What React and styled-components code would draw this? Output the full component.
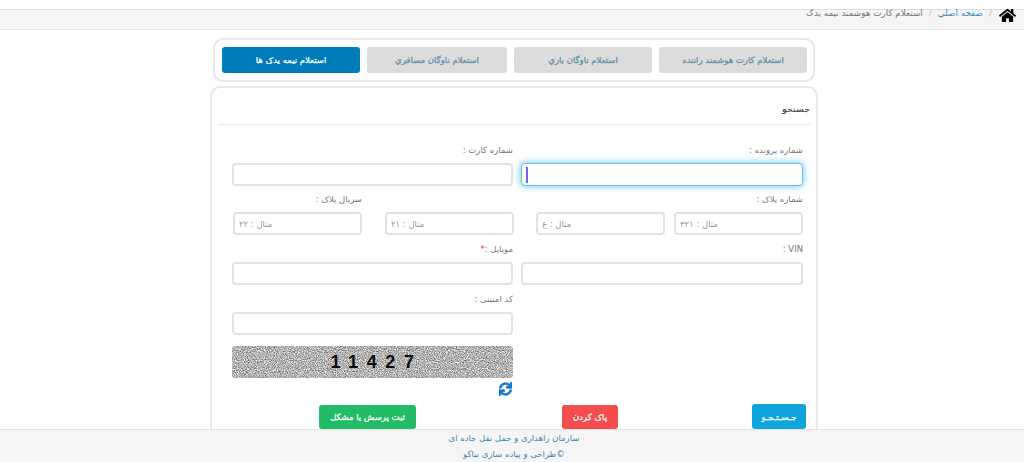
import React from 'react';
import styled, { createGlobalStyle } from 'styled-components';
import { FaHome, FaSync } from 'react-icons/fa';

const GlobalStyle = createGlobalStyle`
  html, body {
    margin: 0;
    height: 100%;
    overflow: hidden;
    background: #fff;
  }
  body {
    font-family: "DejaVu Sans", "Noto Sans", sans-serif;
    font-size: 8.5px;
    color: #777;
  }
  * {
    box-sizing: border-box;
  }
`;

const Page = styled.div`
  direction: rtl;
  padding-top: 9px;
  height: 462px;
  overflow: hidden;
`;

const Breadcrumb = styled.div`
  display: flex;
  align-items: flex-start;
  height: 21px;
  padding-right: 8px;
  background: #f5f5f5;
  border-top: 1px solid #ddd;
  border-bottom: 1px solid #e6e6e6;
  font-size: 8.8px;
  line-height: 7px;
`;

const HomeIcon = styled(FaHome)`
  width: 17px;
  height: 17px;
  margin: -3px 0 0 1px;
  color: #000;
  flex: none;
`;

const Crumb = styled.a`
  color: ${(p) => (p.$current ? '#777' : '#3a8fc0')};
  white-space: nowrap;
`;

const Slash = styled.span`
  color: #bbb;
  margin: 0 6px;
`;

const Column = styled.div`
  width: 608px;
  margin: 8px 206px 0 0;
`;

const TabBar = styled.div`
  display: flex;
  gap: 7px;
  width: 602px;
  height: 44px;
  margin: 0 3px;
  padding: 7px 6px 7px 7px;
  border: 2px solid #e8e8e8;
  border-radius: 10px;
`;

const Tab = styled.div`
  display: flex;
  align-items: center;
  justify-content: center;
  width: ${(p) => p.$width}px;
  height: 26px;
  border-radius: 3px;
  font-size: 8.5px;
  -webkit-text-stroke: 0.25px currentColor;
  background: ${(p) => (p.$active ? '#007cba' : '#dcdcdc')};
  color: ${(p) => (p.$active ? '#fff' : '#5f8fab')};
`;

const Panel = styled.div`
  height: 400px;
  margin-top: 4px;
  padding: 0 6px;
  border: 2px solid #e8e8e8;
  border-radius: 10px;
`;

const PanelHeader = styled.div`
  display: flex;
  align-items: center;
  height: 37px;
  padding-top: 7px;
  border-bottom: 1px solid #e6e6e6;
  color: #555;
  font-size: 8px;
  font-weight: bold;
`;

const FormBody = styled.div`
  padding: 19px 7px 0 15px;
`;

const TwoCols = styled.div`
  display: grid;
  grid-template-columns: 282px 281px;
  column-gap: 8px;
  margin-bottom: ${(p) => p.$after ?? 7}px;
`;

const Field = styled.div`
  position: relative;
  width: ${(p) => (p.$width ? `${p.$width}px` : 'auto')};
  margin-left: ${(p) => p.$gap ?? 0}px;
`;

const Label = styled.div`
  height: 13px;
  line-height: 13px;
  margin-bottom: 6px;
  color: #777;
`;

const Star = styled.span`
  color: #e33;
`;

const Input = styled.input`
  display: block;
  width: 100%;
  height: 23px;
  direction: ltr;
  padding: 0 4px;
  font: inherit;
  font-size: 8.5px;
  background: #fff;
  border: ${(p) => (p.$focused ? '1px solid #66c4ea' : '2px solid #e2e2e2')};
  border-radius: 4px;
  box-shadow: ${(p) => (p.$focused ? '0 0 6px 1px rgba(82, 190, 240, 0.75)' : 'none')};
  outline: none;
  &::placeholder {
    color: #999;
  }
`;

const Caret = styled.span`
  position: absolute;
  left: 5px;
  bottom: 3px;
  width: 2px;
  height: 16px;
  background: #6a6af0;
`;

const PlateRow = styled.div`
  display: flex;
  margin-bottom: 8px;
`;

const Captcha = styled.div`
  position: relative;
  display: flex;
  align-items: center;
  justify-content: center;
  width: 281px;
  height: 32px;
  margin-top: 11px;
  margin-right: 290px;
  padding-left: 8px;
  overflow: hidden;
  border-radius: 3px;
  direction: ltr;
`;

const Noise = styled.svg`
  position: absolute;
  inset: 0;
`;

const Digits = styled.span`
  position: relative;
  font-family: "Liberation Sans", Arial, sans-serif;
  font-weight: bold;
  font-size: 18px;
  letter-spacing: 8.6px;
  color: #0c0c0c;
`;

const RefreshRow = styled.div`
  display: flex;
  margin: 4px 291px 0 0;
  height: 14px;
`;

const RefreshIcon = styled(FaSync)`
  width: 13px;
  height: 14px;
  color: #1575c8;
  stroke: currentColor;
  stroke-width: 30;
`;

const Actions = styled.div`
  display: flex;
  align-items: flex-end;
  margin: 8px -3px 0 0;
`;

const Button = styled.button`
  height: ${(p) => p.$height ?? 24}px;
  width: ${(p) => p.$width}px;
  margin-left: ${(p) => p.$gap ?? 0}px;
  padding: 0;
  border: 0;
  border-radius: 3px;
  font-family: inherit;
  font-size: 8.5px;
  -webkit-text-stroke: 0.25px currentColor;
  color: #fff;
  background: ${(p) => p.$color};
`;

const Footer = styled.div`
  position: fixed;
  left: 0;
  right: 0;
  bottom: 0;
  height: 33px;
  padding-left: 4px;
  background: #f5f5f5;
  border-top: 1px solid #e2e2e2;
  text-align: center;
  color: #3a87b8;
  font-size: 8.5px;
  line-height: 16px;
`;

const NoiseImage = () => (
  <Noise width="281" height="32">
    <filter id="grain" x="0" y="0" width="100%" height="100%" colorInterpolationFilters="sRGB">
      <feTurbulence type="fractalNoise" baseFrequency="0.9" numOctaves="2" seed="7" />
      <feColorMatrix
        values="1 0 0 0 0.2
                1 0 0 0 0.2
                1 0 0 0 0.2
                0 0 0 0 1"
      />
    </filter>
    <rect width="281" height="32" filter="url(#grain)" />
  </Noise>
);

const App = () => (
  <Page>
    <GlobalStyle />
    <Breadcrumb>
      <HomeIcon />
      <Slash>/</Slash>
      <Crumb>صفحه اصلي</Crumb>
      <Slash>/</Slash>
      <Crumb $current>استعلام کارت هوشمند نیمه یدک</Crumb>
    </Breadcrumb>
    <Column>
      <TabBar>
        <Tab $width={148}>استعلام کارت هوشمند راننده</Tab>
        <Tab $width={138}>استعلام ناوگان باري</Tab>
        <Tab $width={140}>استعلام ناوگان مسافري</Tab>
        <Tab $width={138} $active>استعلام نیمه یدک ها</Tab>
      </TabBar>
      <Panel>
        <PanelHeader>جستجو</PanelHeader>
        <FormBody>
          <TwoCols>
            <Field>
              <Label>شماره پرونده :</Label>
              <Input $focused />
              <Caret />
            </Field>
            <Field>
              <Label>شماره کارت :</Label>
              <Input />
            </Field>
          </TwoCols>
          <PlateRow>
            <Field $width={129} $gap={9}>
              <Label>شماره پلاک :</Label>
              <Input placeholder="مثال : ۳۲۱" />
            </Field>
            <Field $width={129} $gap={22}>
              <Label>&nbsp;</Label>
              <Input placeholder="مثال : ع" />
            </Field>
            <Field $width={129} $gap={23}>
              <Label>&nbsp;</Label>
              <Input placeholder="مثال : ۲۱" />
            </Field>
            <Field $width={129}>
              <Label>سریال پلاک :</Label>
              <Input placeholder="مثال : ۲۲" />
            </Field>
          </PlateRow>
          <TwoCols $after={8}>
            <Field>
              <Label>VIN :</Label>
              <Input />
            </Field>
            <Field>
              <Label>موبایل :<Star>*</Star></Label>
              <Input />
            </Field>
          </TwoCols>
          <TwoCols $after={0}>
            <div />
            <Field>
              <Label>کد امنیتی :</Label>
              <Input />
            </Field>
          </TwoCols>
          <Captcha>
            <NoiseImage />
            <Digits>11427</Digits>
          </Captcha>
          <RefreshRow>
            <RefreshIcon />
          </RefreshRow>
          <Actions>
            <Button $width={54} $height={25} $gap={134} $color="#0ea5dd">جـسـتـجـو</Button>
            <Button $width={56} $gap={146} $color="#f44d4d">پاک کردن</Button>
            <Button $width={97} $color="#22bb66">ثبت پرسش یا مشکل</Button>
          </Actions>
        </FormBody>
      </Panel>
    </Column>
    <Footer>
      <div>سازمان راهداری و حمل نقل جاده ای</div>
      <div>©طراحی و پیاده سازی نیاکو</div>
    </Footer>
  </Page>
);

export default App;
